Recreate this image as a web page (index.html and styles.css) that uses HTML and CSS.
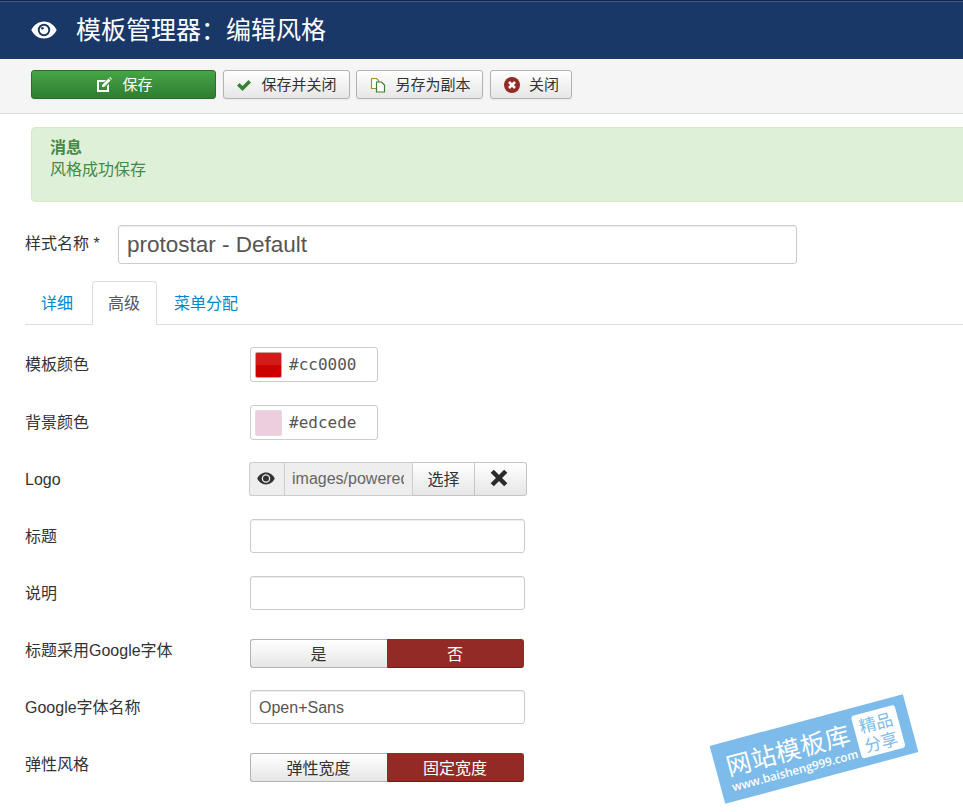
FILE: index.html
```html
<!DOCTYPE html>
<html lang="zh">
<head>
<meta charset="utf-8">
<title>模板管理器：编辑风格</title>
<link rel="stylesheet" href="styles.css">
</head>
<body>
<header class="topbar">
  <svg class="eye-title" viewBox="0 0 26 18"><path fill-rule="evenodd" d="M13 .5C7.500.5 2.800 4 .3 9c2.500 5 7.200 8.500 12.700 8.500S23.200 14 25.700 9C23.200 4 18.500.5 13 .5zm0 2.300a6.200 6.200 0 1 1 0 12.400 6.200 6.200 0 0 1 0-12.400z" fill="#fff"/><circle cx="13" cy="9" r="4.300" fill="#fff"/><circle cx="11.400" cy="7.300" r="1.300" fill="#1a3867"/></svg>
  <h1 class="page-title">模板管理器：编辑风格</h1>
</header>
<nav class="toolbar">
  <button class="btn btn-save"><svg class="ic" viewBox="0 0 16 16"><path fill="#fff" d="M1 3h9L8 5H3v8h8V9l2-2v8H1z"/><path fill="#fff" d="M6 8l6.500-6.500 2 2L8 10H6zM13.200.8l.8-.8 2 2-.8.8z"/></svg><span>保存</span></button>
  <button class="btn btn-apply"><svg class="ic" viewBox="0 0 16 16"><path fill="#378137" d="M1 8.500l2.500-2.500 3 3L12.500 3 15 5.500 6.500 14z"/></svg><span>保存并关闭</span></button>
  <button class="btn btn-copy"><svg class="ic" viewBox="0 0 16 16"><path fill="#fff" stroke="#b08a2a" stroke-width="1.200" d="M1.500 1.500h5l2 2v8h-7z"/><path fill="#fff" stroke="#378137" stroke-width="1.200" d="M6.500 5h5l3 3v7h-8z"/></svg><span>另存为副本</span></button>
  <button class="btn btn-close"><svg class="ic" viewBox="0 0 16 16"><circle cx="8" cy="8" r="8" fill="#942a25"/><path stroke="#fff" stroke-width="2.600" d="M5 5l6 6M11 5l-6 6"/></svg><span>关闭</span></button>
</nav>
<main class="content">
  <section class="alert">
    <h4 class="alert-title">消息</h4>
    <p class="alert-text">风格成功保存</p>
  </section>
  <div class="title-row">
    <label class="title-label">样式名称 *</label>
    <input class="title-input" type="text" value="protostar - Default">
  </div>
  <ul class="tabs">
    <li class="tab"><a href="#">详细</a></li>
    <li class="tab active"><a href="#">高级</a></li>
    <li class="tab"><a href="#">菜单分配</a></li>
  </ul>
  <div class="form">
    <div class="row">
      <label class="lbl">模板颜色</label>
      <div class="color c1"><span class="swatch red"></span><span class="hex">#cc0000</span></div>
    </div>
    <div class="row">
      <label class="lbl">背景颜色</label>
      <div class="color c2"><span class="swatch pink"></span><span class="hex">#edcede</span></div>
    </div>
    <div class="row">
      <label class="lbl">Logo</label>
      <div class="media">
        <span class="media-eye"><svg viewBox="0 0 26 18" class="eye-small"><path fill-rule="evenodd" fill="#333" d="M13 .5C7.500.5 2.800 4 .3 9c2.500 5 7.200 8.500 12.700 8.500S23.200 14 25.700 9C23.200 4 18.500.5 13 .5zm0 2.300a6.200 6.200 0 1 1 0 12.400 6.200 6.200 0 0 1 0-12.400z"/><circle cx="13" cy="9" r="4.300" fill="#333"/></svg></span>
        <span class="media-path"><span class="media-text">images/powered_by.png</span></span>
        <span class="media-btn select">选择</span>
        <span class="media-btn clear"><svg viewBox="0 0 16 16" class="x"><path stroke="#2b2b2b" stroke-width="4" d="M2 2l12 12M14 2L2 14"/></svg></span>
      </div>
    </div>
    <div class="row">
      <label class="lbl">标题</label>
      <input class="field" type="text">
    </div>
    <div class="row">
      <label class="lbl">说明</label>
      <input class="field" type="text">
    </div>
    <div class="row">
      <label class="lbl">标题采用Google字体</label>
      <div class="toggle"><span class="opt">是</span><span class="opt on">否</span></div>
    </div>
    <div class="row">
      <label class="lbl">Google字体名称</label>
      <input class="field" type="text" value="Open+Sans">
    </div>
    <div class="row">
      <label class="lbl">弹性风格</label>
      <div class="toggle"><span class="opt">弹性宽度</span><span class="opt on">固定宽度</span></div>
    </div>
  </div>
</main>
<aside class="stamp">
  <div class="stamp-main">
    <div class="stamp-name">网站模板库</div>
    <div class="stamp-url">www.baisheng999.com</div>
  </div>
  <div class="stamp-box">精品<br>分享</div>
</aside>
</body>
</html>
```
FILE: styles.css
```css
* { box-sizing: border-box; }
html, body { margin: 0; height: 812px; overflow: hidden; background: #fff; }
body { font-family: "Liberation Sans", "Noto Sans CJK SC", sans-serif; font-size: 16px; color: #333; width: 963px; position: relative; }

.topbar { height: 59px; background: #1a3867; border-top: 1px solid #0f2547; box-shadow: inset 0 1px 0 #3a5a8a; display: flex; align-items: center; padding: 0 0 0 31px; }
.eye-title { width: 26px; height: 18px; margin-right: 19px; }
.page-title { margin: 0; font-size: 25px; font-weight: 400; color: #fff; line-height: 30px; }

.toolbar { height: 55px; background: #f5f5f5; border-bottom: 1px solid #ddd; padding: 11px 0 0 31px; display: flex; gap: 7px; align-items: flex-start; }
.btn { height: 29px; border: 1px solid #b3b3b3; border-radius: 3px; background: linear-gradient(#fff, #e6e6e6); color: #333; font: 15px/1 "Liberation Sans", "Noto Sans CJK SC", sans-serif; display: flex; align-items: center; justify-content: center; padding: 0; box-shadow: 0 1px 2px rgba(0,0,0,.05); }
.ic { width: 16px; height: 16px; margin-right: 9px; flex: none; }
.btn-save { width: 185px; background: linear-gradient(#46a546, #2f7d32); border-color: #2a6e2d; color: #fff; padding-left: 2px; }
.btn-save .ic { margin-right: 10px; }
.btn-apply { width: 127px; }
.btn-copy { width: 127px; margin-left: -1px; padding-left: 2px; }
.btn-close { width: 82px; padding-left: 1px; }

.content { padding: 13px 0 0 25px; }
.alert { margin: 0 -20px 0 6px; height: 75px; background: #dff0d8; border: 1px solid #d6e9c6; border-radius: 4px; padding: 9px 18px; color: #468847; }
.alert-title { margin: 0; font-size: 16px; font-weight: 700; line-height: 21px; }
.alert-text { margin: 2px 0 0; font-size: 16px; line-height: 20px; }

.title-row { display: flex; align-items: flex-start; margin-top: 23px; height: 39px; }
.title-label { width: 93px; color: #333; font-size: 16px; line-height: 20px; padding-top: 9px; }
.title-input { width: 679px; height: 39px; border: 1px solid #ccc; border-radius: 3px; padding: 0 8px; font: 22.500px "Liberation Sans", "Noto Sans CJK SC", sans-serif; color: #555; box-shadow: inset 0 1px 1px rgba(0,0,0,.075); outline: 0; }

.tabs { list-style: none; margin: 17px 0 0; padding: 0; display: flex; height: 44px; border-bottom: 1px solid #ddd; }
.tab { padding: 0 16px 4px 15px; height: 44px; display: flex; align-items: center; border: 1px solid transparent; border-bottom: 0; }
.tab a { color: #0088cc; text-decoration: none; font-size: 16px; }
.tab.active { height: 44px; width: 65px; background: #fff; border-color: #ddd; border-radius: 4px 4px 0 0; padding: 0 15px 4px; margin-left: 2px; margin-right: 1px; }
.tab.active a { color: #555; }

.form { padding-top: 22px; }
.row { display: flex; align-items: flex-start; height: 57px; }
.lbl { width: 225px; flex: none; color: #333; font-size: 16px; line-height: 20px; padding-top: 9px; }
.row:first-child .lbl { padding-top: 8px; }

.color { width: 128px; border: 1px solid #ccc; border-radius: 3px; display: flex; align-items: center; padding-left: 4px; background: #fff; height: 35px; }
.c2 { margin-top: 1px; }
.swatch { width: 27px; height: 26px; border-radius: 2px; border: 1px solid #ddd; margin-right: 7px; flex: none; }
.red { background: linear-gradient(#d21b1b 50%, #cc0000 50%); border-color: #c9a0a0; }
.pink { background: #edcede; }
.hex { font: 16px "DejaVu Sans Mono", monospace; color: #555; }

.media { display: flex; margin-top: 1px; height: 34px; width: 278px; margin-left: -1px; }
.media-eye { width: 35px; border: 1px solid #ccc; border-right: 0; border-radius: 3px 0 0 3px; background: #eee; display: flex; align-items: center; justify-content: center; padding-right: 3px; padding-bottom: 2px; }
.eye-small { width: 18px; height: 13px; }
.media-path { width: 129px; border: 1px solid #ccc; background: #eee; padding: 0 8px 0 7px; display: flex; align-items: center; overflow: hidden; }
.media-text { color: #666; white-space: nowrap; overflow: hidden; display: block; width: 100%; font-size: 16px; }
.media-btn { height: 34px; background: linear-gradient(#fff, #e6e6e6); border: 1px solid #c5c5c5; border-left: 0; display: flex; align-items: center; justify-content: center; padding-bottom: 2px; }
.select { width: 62px; }
.clear { width: 52px; border-radius: 0 3px 3px 0; padding-right: 4px; }
.x { width: 18px; height: 18px; }

.field { width: 275px; height: 34px; margin-top: 1px; border: 1px solid #ccc; border-radius: 3px; padding: 1px 8px 0; font: 16px "Liberation Sans", sans-serif; color: #555; box-shadow: inset 0 1px 1px rgba(0,0,0,.075); outline: 0; background: #fff; }

.toggle { display: flex; width: 274px; height: 29px; margin-top: 7px; }
.opt { width: 137px; display: flex; align-items: center; justify-content: center; font-size: 16px; border: 1px solid #b3b3b3; border-right: 0; border-radius: 3px 0 0 3px; background: linear-gradient(#fff, #e6e6e6); padding-right: 1px; padding-bottom: 1px; }
.opt.on { background: #942a25; color: #fff; border: 1px solid #942a25; border-bottom-color: #6f1c18; border-radius: 0 3px 3px 0; }

.stamp { position: absolute; left: 714px; top: 719px; width: 200px; height: 60px; background: #7dbcea; transform: rotate(-15deg); display: flex; align-items: center; padding: 0 6px 0 11px; color: #fff; }
.stamp-main { width: 133px; flex: none; }
.stamp-name { font-size: 25px; line-height: 30px; letter-spacing: .500px; white-space: nowrap; font-family: "Noto Sans CJK SC", sans-serif; }
.stamp-url { font: 600 11.700px/14px "Open Sans", sans-serif; white-space: nowrap; }
.stamp-box { width: 45px; height: 44px; background: #fff; border-radius: 3px; color: #7dbcea; font-size: 17px; line-height: 20px; text-align: center; padding-top: 2px; font-family: "Noto Sans CJK SC", sans-serif; }
```
